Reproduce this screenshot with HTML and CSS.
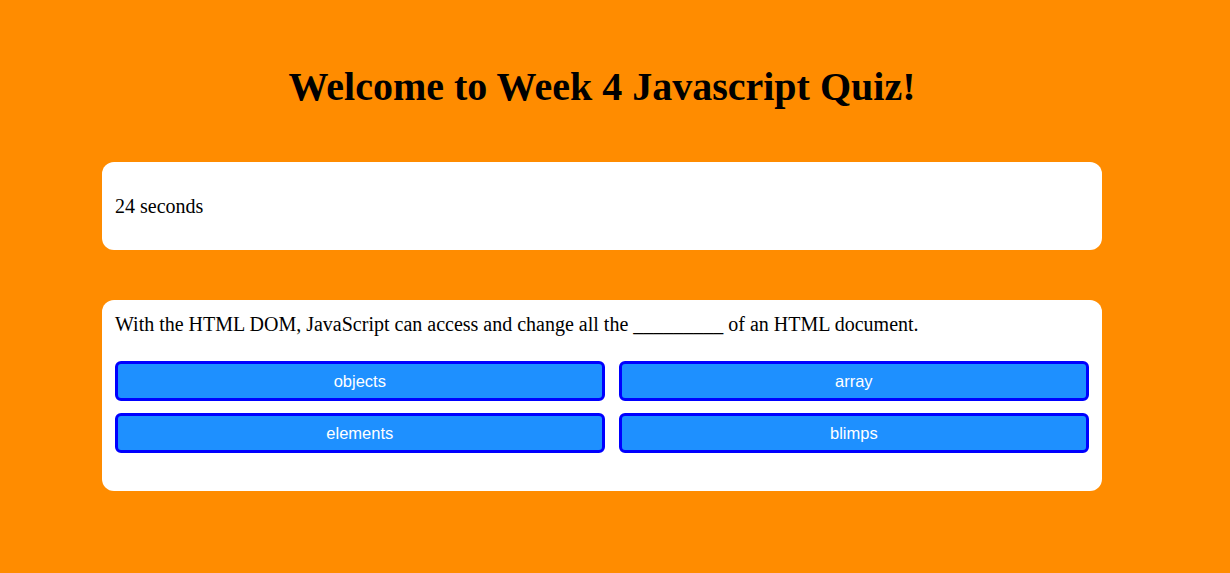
FILE: index.html
```html
<!DOCTYPE html>
<html lang="en">
<head>
<meta charset="utf-8">
<title>Week 4 Javascript Quiz</title>
<link rel="stylesheet" href="styles.css">
</head>
<body>
<main class="page">
  <h1 class="title">Welcome to Week 4 Javascript Quiz!</h1>
  <section class="card timer-card">
    <p class="timer">24 seconds</p>
  </section>
  <section class="card question-card">
    <p class="question">With the HTML DOM, JavaScript can access and change all the _________ of an HTML document.</p>
    <div class="answers">
      <button class="answer" type="button">objects</button>
      <button class="answer" type="button">array</button>
      <button class="answer" type="button">elements</button>
      <button class="answer" type="button">blimps</button>
    </div>
  </section>
</main>
</body>
</html>
```

FILE: styles.css
```css
html, body {
  margin: 0;
  background: #ff8c00;
}
body {
  padding: 0 26px 0 0;
  font-family: "Liberation Serif", "Times New Roman", serif;
  color: #000;
}
.page {
  width: 1000px;
  margin: 0 auto;
  padding-top: 64px;
}
.title {
  margin: 0 0 52px;
  font-size: 40px;
  line-height: 46px;
  font-weight: bold;
  text-align: center;
}
.card {
  background: #fff;
  border-radius: 12px;
  padding: 12px 13px;
}
.timer-card {
  margin-bottom: 50px;
}
.timer {
  margin: 20px 0;
  font-size: 20px;
  line-height: 24px;
}
.question-card {
  padding: 13px 13px 38px;
}
.question {
  margin: 0 0 25px;
  font-size: 20px;
  line-height: 23px;
}
.answers {
  display: grid;
  grid-template-columns: auto auto;
  gap: 12px 14px;
}
.answer {
  font-family: "Liberation Sans", Arial, sans-serif;
  font-size: 16.5px;
  line-height: 18px;
  color: #fff;
  background: #1e90ff;
  border: 3px solid #0000ff;
  border-radius: 6px;
  padding: 8px 10px;
  text-align: center;
}
```
